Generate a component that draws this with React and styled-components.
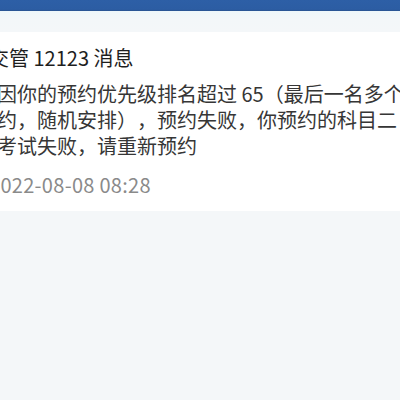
import styled, { createGlobalStyle } from "styled-components";

const GlobalStyle = createGlobalStyle`
    html, body {
        margin: 0;
        padding: 0;
        overflow: hidden;
        background: #f4f7f9;
        font-family: "Noto Sans CJK SC", "Noto Sans", sans-serif;
    }
`;

const message = {
    title: "交管 12123 消息",
    lines: [
        "因你的预约优先级排名超过 65（最后一名多个",
        "约，随机安排），预约失败，你预约的科目二",
        "考试失败，请重新预约",
    ],
    time: "2022-08-08 08:28",
};

const App = () => {
    return (
        <Page>
            <GlobalStyle />
            <NavBar />
            <Gap />
            <MessageCard>
                <MessageTitle>{message.title}</MessageTitle>
                <MessageBody>
                    {message.lines.map((line) => (
                        <MessageLine key={line}>{line}</MessageLine>
                    ))}
                </MessageBody>
                <MessageTime>{message.time}</MessageTime>
            </MessageCard>
        </Page>
    );
};

const Page = styled.div`
    width: 400px;
    height: 400px;
    display: flex;
    flex-direction: column;
    overflow: hidden;
    background: #f4f7f9;
`;

const NavBar = styled.header`
    height: 11px;
    flex-shrink: 0;
    background: linear-gradient(to bottom, #2d5fa6 0%, #2c5da3 85%, #28528f 100%);
`;

const Gap = styled.div`
    height: 21px;
    flex-shrink: 0;
    background: linear-gradient(to bottom, #eef7fa 0%, #f3f7f9 40%, #f4f7f9 100%);
`;

const MessageCard = styled.section`
    background: #ffffff;
    padding: 13px 0;
    margin-left: -11px;
    display: flex;
    flex-direction: column;
    gap: 10px;
    overflow: hidden;
`;

const MessageTitle = styled.h3`
    margin: 0;
    font-size: 20px;
    font-weight: 400;
    line-height: 26px;
    color: #1e1e1e;
    white-space: nowrap;
`;

const MessageBody = styled.div`
    margin-left: 8px;
    display: flex;
    flex-direction: column;
`;

const MessageLine = styled.p`
    margin: 0;
    font-size: 20px;
    line-height: 26px;
    color: #363636;
    white-space: nowrap;
    text-spacing-trim: space-all;
    font-feature-settings: "palt" 0, "halt" 0;
`;

const MessageTime = styled.span`
    margin-top: 3px;
    font-size: 20px;
    line-height: 26px;
    letter-spacing: 0.3px;
    color: #8a8a8a;
    white-space: nowrap;
`;

export default App;
